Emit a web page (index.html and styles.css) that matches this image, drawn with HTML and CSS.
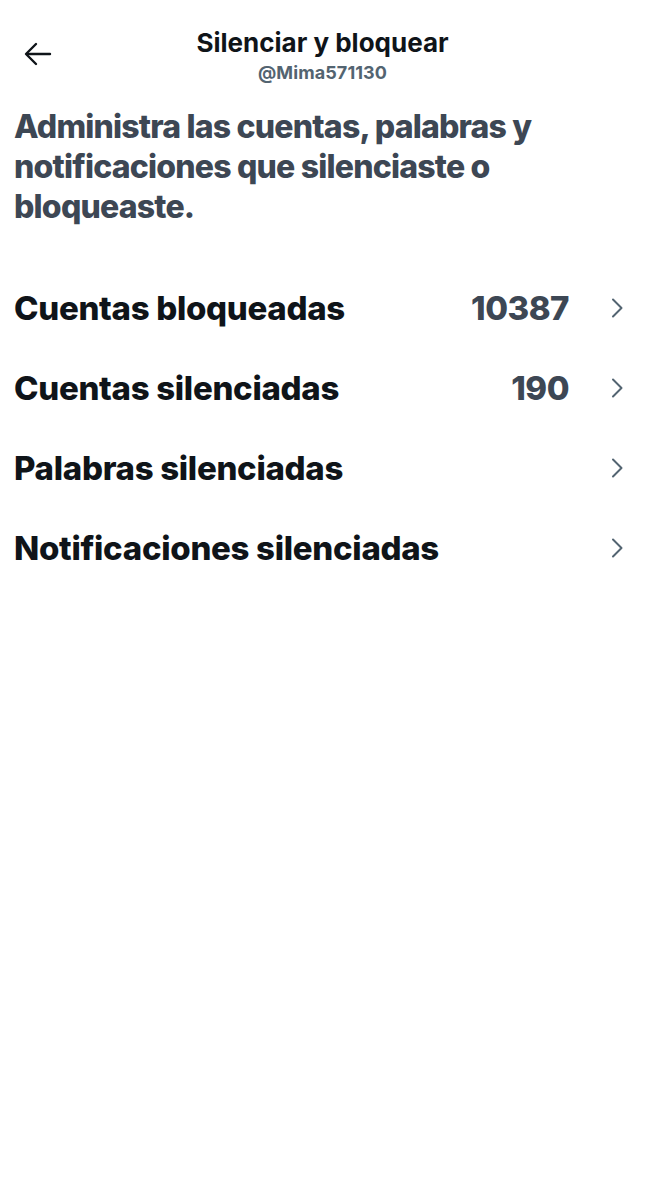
FILE: index.html
```html
<!DOCTYPE html>
<html lang="es">
<head>
    <meta charset="UTF-8">
    <meta name="viewport" content="width=device-width, initial-scale=1.0">
    <title>Silenciar y bloquear</title>
    <link rel="stylesheet" href="styles.css">
</head>
<body>
    <header class="header">
        <button class="back" aria-label="Atrás">
            <svg width="28" height="24" viewBox="0 0 28 24" fill="none" stroke="#0f1419" stroke-width="2.4" stroke-linecap="round" stroke-linejoin="round">
                <path d="M26 12H3"/>
                <path d="M12 2L2 12l10 10"/>
            </svg>
        </button>
        <div class="titles">
            <h1>Silenciar y bloquear</h1>
            <div class="handle">@Mima571130</div>
        </div>
        <div></div>
    </header>

    <p class="intro">Administra las cuentas, palabras y notificaciones que silenciaste o bloqueaste.</p>

    <ul class="list">
        <li class="row">
            <span class="label">Cuentas bloqueadas</span>
            <span class="count">10387</span>
            <svg class="chevron" width="12" height="20" viewBox="0 0 12 20" fill="none" stroke="#536471" stroke-width="2" stroke-linecap="round" stroke-linejoin="round"><path d="M2 1.5l8.5 8.5L2 18.5"/></svg>
        </li>
        <li class="row">
            <span class="label">Cuentas silenciadas</span>
            <span class="count">190</span>
            <svg class="chevron" width="12" height="20" viewBox="0 0 12 20" fill="none" stroke="#536471" stroke-width="2" stroke-linecap="round" stroke-linejoin="round"><path d="M2 1.5l8.5 8.5L2 18.5"/></svg>
        </li>
        <li class="row">
            <span class="label">Palabras silenciadas</span>
            <span class="count"></span>
            <svg class="chevron" width="12" height="20" viewBox="0 0 12 20" fill="none" stroke="#536471" stroke-width="2" stroke-linecap="round" stroke-linejoin="round"><path d="M2 1.5l8.5 8.5L2 18.5"/></svg>
        </li>
        <li class="row">
            <span class="label">Notificaciones silenciadas</span>
            <span class="count"></span>
            <svg class="chevron" width="12" height="20" viewBox="0 0 12 20" fill="none" stroke="#536471" stroke-width="2" stroke-linecap="round" stroke-linejoin="round"><path d="M2 1.5l8.5 8.5L2 18.5"/></svg>
        </li>
    </ul>
</body>
</html>
```

FILE: styles.css
```css
body {
    margin: 0;
    font-family: 'Inter', 'Roboto', sans-serif;
    font-weight: 700;
    color: #0f1419;
    background-color: #fff;
}
.header {
    display: grid;
    grid-template-columns: 1fr auto 1fr;
    align-items: start;
    padding: 27px 0 0;
}
.back {
    justify-self: start;
    margin: 15px 0 0 24px;
    padding: 0;
    border: none;
    background: none;
    line-height: 0;
}
.titles {
    text-align: center;
}
h1 {
    margin: 0;
    font-size: 26px;
    line-height: 32px;
    letter-spacing: 0;
}
.handle {
    margin-top: 3px;
    font-size: 18px;
    line-height: 22px;
    color: #536471;
    letter-spacing: 0.1px;
}
.intro {
    margin: 23px 0 0;
    padding: 0 30px 0 14px;
    font-size: 32px;
    font-weight: 800;
    line-height: 40px;
    color: #3d4754;
    letter-spacing: -0.8px;
}
.list {
    list-style: none;
    margin: 41px 0 0;
    padding: 0;
}
.row {
    display: flex;
    align-items: center;
    height: 80px;
    padding: 0 22px 0 14px;
}
.label {
    flex: 1;
    font-size: 33px;
    font-weight: 800;
    letter-spacing: -0.3px;
}
.count {
    margin-right: 42px;
    font-size: 33px;
    font-weight: 800;
    color: #3d4754;
    letter-spacing: -0.5px;
}
.chevron {
    flex: none;
}
```
